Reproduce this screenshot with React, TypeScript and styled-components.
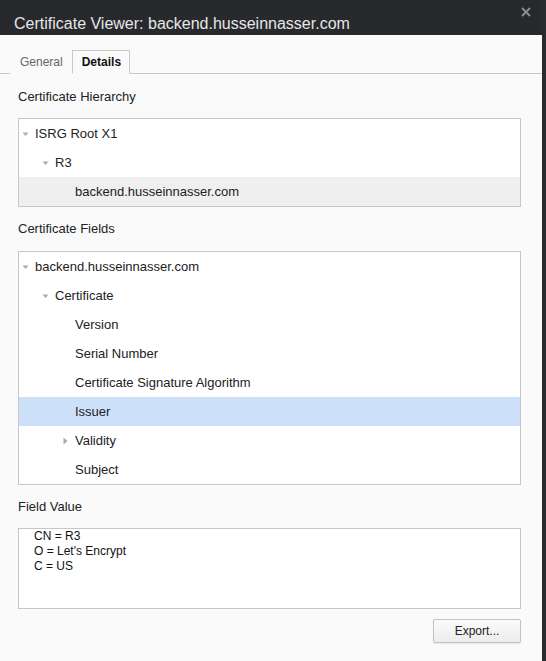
import React from 'react'
import styled, { createGlobalStyle } from 'styled-components'

const Global = createGlobalStyle`
  html, body {
    margin: 0;
    padding: 0;
    background: #2a2b2e;
  }
  * { box-sizing: border-box; }
`

const Dialog = styled.div`
  width: 542px;
  height: 661px;
  background: #fafafa;
  display: flex;
  flex-direction: column;
  font-family: "Liberation Sans", Arial, sans-serif;
  color: #222;
`

const TitleBar = styled.div`
  height: 35px;
  background: #28292c;
  display: flex;
  align-items: flex-end;
  padding: 0 14px 2px 14px;
  position: relative;
`

const Title = styled.div`
  color: #e6e6e6;
  font-size: 16px;
  line-height: 18px;
`

const Close = styled.div`
  position: absolute;
  right: 11px;
  top: 7px;
  width: 10px;
  height: 10px;
  display: flex;
`

const TabStrip = styled.div`
  margin-top: 15px;
  height: 24px;
  display: flex;
  align-items: stretch;
  border-bottom: 1px solid #c9c9c9;
  padding-left: 10px;
`

const Tab = styled.div<{ $active?: boolean }>`
  padding: 0 8px 0 9px;
  font-size: 12px;
  display: flex;
  align-items: center;
  margin-bottom: -1px;
  color: ${p => (p.$active ? '#111' : '#666')};
  font-weight: ${p => (p.$active ? 700 : 400)};
  background: #fafafa;
  border: 1px solid ${p => (p.$active ? '#c9c9c9' : 'transparent')};
  border-bottom-color: ${p => (p.$active ? '#fafafa' : 'transparent')};
`

const Body = styled.div`
  padding: 0 21px 0 18px;
  display: flex;
  flex-direction: column;
`

const Label = styled.div<{ $top?: number; $bottom?: number }>`
  font-size: 13px;
  color: #222;
  height: 14px;
  line-height: 14px;
  margin-top: ${p => p.$top ?? 15}px;
  margin-bottom: ${p => p.$bottom ?? 15}px;
`

const TreeBox = styled.div<{ $h: number }>`
  height: ${p => p.$h}px;
  background: #fff;
  border: 1px solid #c6c6c6;
  overflow: hidden;
`

const Row = styled.div<{ $level: number; $sel?: 'grey' | 'blue' }>`
  height: 29px;
  display: flex;
  align-items: center;
  font-size: 13px;
  color: #222;
  padding-left: ${p => 3 + p.$level * 20}px;
  background: ${p =>
    p.$sel === 'grey' ? '#efefef' : p.$sel === 'blue' ? '#cde0f9' : 'transparent'};
`

const Twisty = styled.span`
  width: 13px;
  display: inline-flex;
  align-items: center;
  flex-shrink: 0;
`

const ValueBox = styled.div`
  height: 81px;
  background: #fff;
  border: 1px solid #c6c6c6;
  padding: 0 15px;
  font-size: 12px;
  line-height: 15px;
  color: #111;
`

const Footer = styled.div`
  display: flex;
  justify-content: flex-end;
  margin-top: 10px;
`

const Button = styled.button`
  width: 88px;
  height: 24px;
  font-family: "Liberation Sans", Arial, sans-serif;
  font-size: 12px;
  color: #222;
  background: linear-gradient(#fbfbfb, #ececec);
  border: 1px solid #c2c2c2;
  border-radius: 2px;
  box-shadow: 0 1px 1px rgba(0, 0, 0, 0.08);
  padding: 0;
`

type Node = { label: string; level: number; twisty?: 'down' | 'right'; sel?: 'grey' | 'blue' }

const hierarchy: Node[] = [
  { label: 'ISRG Root X1', level: 0, twisty: 'down' },
  { label: 'R3', level: 1, twisty: 'down' },
  { label: 'backend.husseinnasser.com', level: 2, sel: 'grey' },
]

const fields: Node[] = [
  { label: 'backend.husseinnasser.com', level: 0, twisty: 'down' },
  { label: 'Certificate', level: 1, twisty: 'down' },
  { label: 'Version', level: 2 },
  { label: 'Serial Number', level: 2 },
  { label: 'Certificate Signature Algorithm', level: 2 },
  { label: 'Issuer', level: 2, sel: 'blue' },
  { label: 'Validity', level: 2, twisty: 'right' },
  { label: 'Subject', level: 2 },
]

function Arrow({ dir }: { dir?: 'down' | 'right' }) {
  if (!dir) return <Twisty />
  return (
    <Twisty>
      <svg width="8" height="8" viewBox="0 0 8 8">
        {dir === 'down' ? (
          <path d="M0.5 2.5 L6.5 2.5 L3.5 6 Z" fill="#ababab" />
        ) : (
          <path d="M1.5 0.5 L5.5 4 L1.5 7.5 Z" fill="#ababab" />
        )}
      </svg>
    </Twisty>
  )
}

function Tree({ nodes, height }: { nodes: Node[]; height: number }) {
  return (
    <TreeBox $h={height}>
      {nodes.map((n, i) => (
        <Row key={i} $level={n.level} $sel={n.sel}>
          <Arrow dir={n.twisty} />
          {n.label}
        </Row>
      ))}
    </TreeBox>
  )
}

export default function App() {
  return (
    <>
      <Global />
      <Dialog>
        <TitleBar>
          <Title>Certificate Viewer: backend.husseinnasser.com</Title>
          <Close>
            <svg width="10" height="10" viewBox="0 0 10 10">
              <path d="M1 1 L9 9 M9 1 L1 9" stroke="#8b8e93" strokeWidth="1.8" />
            </svg>
          </Close>
        </TitleBar>
        <TabStrip>
          <Tab>General</Tab>
          <Tab $active>Details</Tab>
        </TabStrip>
        <Body>
          <Label $top={16} $bottom={14}>Certificate Hierarchy</Label>
          <Tree nodes={hierarchy} height={89} />
          <Label>Certificate Fields</Label>
          <Tree nodes={fields} height={234} />
          <Label $bottom={14}>Field Value</Label>
          <ValueBox>
            <div>CN = R3</div>
            <div>O = Let's Encrypt</div>
            <div>C = US</div>
          </ValueBox>
          <Footer>
            <Button>Export...</Button>
          </Footer>
        </Body>
      </Dialog>
    </>
  )
}
